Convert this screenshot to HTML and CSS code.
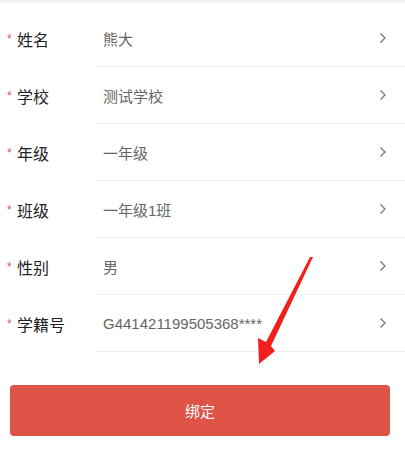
FILE: index.html
```html
<!DOCTYPE html>
<html lang="zh">
<head>
<meta charset="utf-8">
<link rel="stylesheet" href="styles.css">
</head>
<body>
<div class="page">
  <div class="topbar"></div>
  <div class="form">
    <div class="row"><span class="star">*</span><span class="label">姓名</span><div class="field"><span class="value">熊大</span><svg class="chev" viewBox="0 0 8 12"><path d="M1.5 1.5 L6 6 L1.5 10.5" /></svg></div></div>
    <div class="row"><span class="star">*</span><span class="label">学校</span><div class="field"><span class="value">测试学校</span><svg class="chev" viewBox="0 0 8 12"><path d="M1.5 1.5 L6 6 L1.5 10.5" /></svg></div></div>
    <div class="row"><span class="star">*</span><span class="label">年级</span><div class="field"><span class="value">一年级</span><svg class="chev" viewBox="0 0 8 12"><path d="M1.5 1.5 L6 6 L1.5 10.5" /></svg></div></div>
    <div class="row"><span class="star">*</span><span class="label">班级</span><div class="field"><span class="value">一年级1班</span><svg class="chev" viewBox="0 0 8 12"><path d="M1.5 1.5 L6 6 L1.5 10.5" /></svg></div></div>
    <div class="row"><span class="star">*</span><span class="label">性别</span><div class="field"><span class="value">男</span><svg class="chev" viewBox="0 0 8 12"><path d="M1.5 1.5 L6 6 L1.5 10.5" /></svg></div></div>
    <div class="row"><span class="star">*</span><span class="label">学籍号</span><div class="field"><span class="value">G441421199505368****</span><svg class="chev" viewBox="0 0 8 12"><path d="M1.5 1.5 L6 6 L1.5 10.5" /></svg></div></div>
  </div>
  <div class="actions">
    <button class="bind">绑定</button>
  </div>
  <svg class="arrow" viewBox="0 0 405 452" width="405" height="452">
    <polygon points="310,257 313,257 271,346 275,351 259,364 258,338 266,342" />
  </svg>
</div>
</body>
</html>
```
FILE: styles.css
```css
* { box-sizing: border-box; }
html, body { margin: 0; padding: 0; background: #fff; }
body {
  font-family: "Liberation Sans", "Noto Sans CJK SC", sans-serif;
  width: 405px;
  height: 452px;
  overflow: hidden;
}
.page { position: relative; width: 405px; height: 452px; }
.topbar { height: 3px; background: #f2f1f6; }
.form { padding-top: 7px; }
.row {
  display: flex;
  align-items: stretch;
  height: 57px;
}
.star {
  width: 17px;
  padding-left: 7px;
  color: #d3586c;
  font-size: 12px;
  display: flex;
  align-items: center;
}
.label {
  width: 79px;
  font-size: 16px;
  color: #222;
  display: flex;
  align-items: center;
  font-family: "Noto Sans CJK SC", sans-serif;
}
.field {
  flex: 1;
  display: flex;
  align-items: center;
  border-bottom: 1px solid #efefef;
  padding-left: 7px;
  padding-right: 18px;
}
.value {
  flex: 1;
  font-size: 15px;
  color: #666;
}
.chev {
  width: 8px;
  height: 12px;
  fill: none;
  stroke: #777;
  stroke-width: 1.3;
}
.actions { padding: 33px 15px 0 10px; }
.bind {
  display: block;
  width: 100%;
  height: 51px;
  border: none;
  border-radius: 4px;
  background: #dd5346;
  color: #fff;
  font-size: 15px;
  font-family: "Noto Sans CJK SC", sans-serif;
}
.arrow {
  position: absolute;
  left: 0;
  top: 0;
  fill: #f2201c;
  pointer-events: none;
}
```
